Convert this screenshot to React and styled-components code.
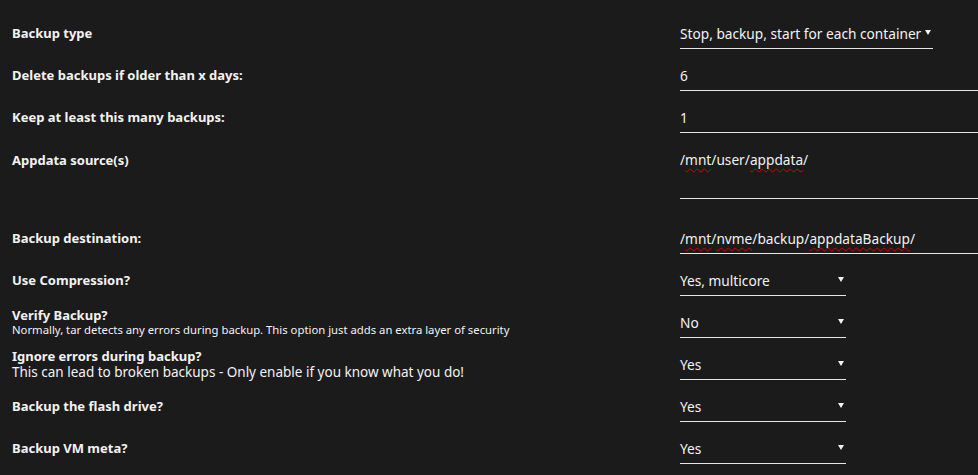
import styled, { createGlobalStyle } from "styled-components";

const GlobalStyle = createGlobalStyle`
  body {
    margin: 0;
    background: #1c1b1b;
    color: #f2f2f2;
    font-family: "Noto Sans", "Open Sans", sans-serif;
    font-size: 13px;
  }
`;

const Page = styled.div`
  display: flex;
  flex-direction: column;
  gap: 11px;
  padding: 18px 0 0 12px;
  width: 978px;
  box-sizing: border-box;
  overflow: hidden;
`;

const Row = styled.div`
  display: grid;
  grid-template-columns: 668px 1fr;
  align-items: start;
  margin-bottom: ${(p) => p.$extra || 0}px;
`;

const Label = styled.div`
  min-height: 31px;
  padding-top: ${(p) => p.$shift || 0}px;
  box-sizing: border-box;
  display: flex;
  flex-direction: column;
  justify-content: center;
  font-weight: bold;
  line-height: 15px;
`;

const Hint = styled.span`
  font-weight: normal;
  font-size: ${(p) => (p.$small ? "11.3px" : "13.5px")};
  line-height: ${(p) => (p.$small ? "14px" : "16px")};
`;

const Control = styled.div`
  box-sizing: border-box;
  height: ${(p) => p.$height || 31}px;
  padding-top: 6px;
  font-size: 13.7px;
  line-height: 19px;
  border-bottom: 1px solid #e6e6e6;
  white-space: nowrap;
`;

const Input = styled(Control)`
  width: 100%;
`;

const Select = styled(Control)`
  justify-self: start;
  display: flex;
  justify-content: space-between;
  gap: 4px;
  width: ${(p) => (p.$auto ? "auto" : "166px")};
  padding-right: 2px;
`;

const Arrow = styled.span`
  align-self: flex-start;
  width: 0;
  height: 0;
  margin-top: 6px;
  border-left: 3px solid transparent;
  border-right: 3px solid transparent;
  border-top: 5px solid #f2f2f2;
`;

const Misspelled = styled.span`
  text-decoration: underline wavy #d40000;
  text-decoration-thickness: 1px;
  text-underline-offset: 3px;
`;

const selects = [
  { label: "Use Compression?", value: "Yes, multicore" },
  {
    label: "Verify Backup?",
    hint: "Normally, tar detects any errors during backup. This option just adds an extra layer of security",
    small: true,
    value: "No",
  },
  {
    label: "Ignore errors during backup?",
    hint: "This can lead to broken backups - Only enable if you know what you do!",
    value: "Yes",
  },
  { label: "Backup the flash drive?", value: "Yes" },
  { label: "Backup VM meta?", value: "Yes" },
];

const App = () => {
  return (
    <>
      <GlobalStyle />
      <Page>
        <Row>
          <Label>Backup type</Label>
          <Select $auto>
            Stop, backup, start for each container
            <Arrow />
          </Select>
        </Row>
        <Row>
          <Label>Delete backups if older than x days:</Label>
          <Input>6</Input>
        </Row>
        <Row>
          <Label>Keep at least this many backups:</Label>
          <Input>1</Input>
        </Row>
        <Row $extra={13}>
          <Label $shift={2}>Appdata source(s)</Label>
          <Input $height={55}>
            /<Misspelled>mnt</Misspelled>/user/<Misspelled>appdata</Misspelled>/
          </Input>
        </Row>
        <Row>
          <Label>Backup destination:</Label>
          <Input>
            /<Misspelled>mnt</Misspelled>/<Misspelled>nvme</Misspelled>/backup/
            <Misspelled>appdataBackup</Misspelled>/
          </Input>
        </Row>
        {selects.map((s) => (
          <Row key={s.label}>
            <Label>
              {s.label}
              {s.hint && <Hint $small={s.small}>{s.hint}</Hint>}
            </Label>
            <Select>
              {s.value}
              <Arrow />
            </Select>
          </Row>
        ))}
      </Page>
    </>
  );
};

export default App;
